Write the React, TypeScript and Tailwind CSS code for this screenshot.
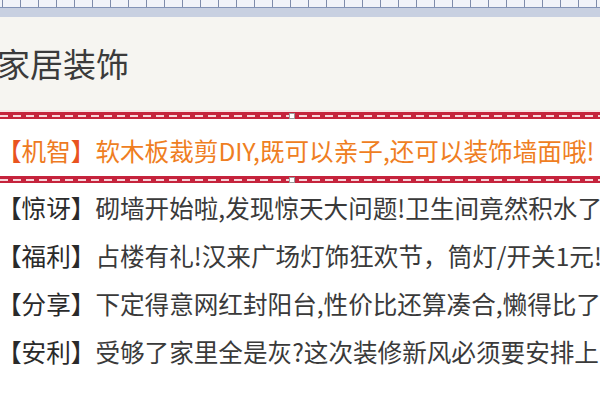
import React from 'react';

const rows = [
  { tag: '【惊讶】', text: '砌墙开始啦,发现惊天大问题!卫生间竟然积水了' },
  { tag: '【福利】', text: '占楼有礼!汉来广场灯饰狂欢节，筒灯/开关1元!' },
  { tag: '【分享】', text: '下定得意网红封阳台,性价比还算凑合,懒得比了' },
  { tag: '【安利】', text: '受够了家里全是灰?这次装修新风必须要安排上' },
];

// red selection band with white dashes and a centre handle
function Band({ h }: { h: string }) {
  return (
    <div className={`relative ${h} bg-[#c5233c] flex items-center`}>
      <div className="w-full h-[2px] bg-[repeating-linear-gradient(90deg,#f6d5da_0_8px,transparent_8px_13px)]" />
      <div className="absolute left-[289px] top-1/2 -translate-y-1/2 w-[6px] h-[6px] bg-white border border-[#999]" />
    </div>
  );
}

export default function App() {
  const ticks = Array.from({ length: 34 });
  return (
    <div
      className="w-[600px] h-[400px] overflow-hidden bg-white"
      style={{ fontFamily: '"Noto Sans CJK SC", "Noto Sans", sans-serif' }}
    >
      {/* ruler */}
      <div className="h-[7px] bg-[#f1f3f9] flex pl-[2px] gap-[17px]">
        {ticks.map((_, i) => (
          <div key={i} className="w-px h-full bg-[#7f8cab] shrink-0" />
        ))}
      </div>
      <div className="h-px bg-[#8393b6]" />
      <div className="h-[9px] bg-[#c8d0e1]" />

      {/* header */}
      <div className="h-[93px] bg-[#f6f5f1] flex items-center">
        <span className="text-[33px] leading-none text-[#3b3b3b] -ml-[3px]">家居装饰</span>
      </div>
      <div className="h-[2px] bg-[#f7e6e6]" />

      {/* selected row */}
      <Band h="h-[7px]" />
      <div className="h-[57px] bg-white flex items-center pt-[6px] whitespace-nowrap">
        <span className="text-[24.6px] leading-none -ml-[3px] text-[#e9541f]">【</span>
        <span className="text-[24.6px] leading-none text-[#ee7a22]">机智</span>
        <span className="text-[24.6px] leading-none text-[#e9541f]">】</span>
        <span className="text-[24.6px] leading-none text-[#ef7e22]">软木板裁剪DIY,既可以亲子,还可以装饰墙面哦!</span>
      </div>
      <Band h="h-[7px]" />

      {/* list */}
      <div className="flex flex-col">
        {rows.map((r) => (
          <div key={r.tag} className="h-[48px] flex items-center whitespace-nowrap">
            <span className="text-[24.6px] leading-none -ml-[3px] text-[#2a2a2a]">{r.tag}</span>
            <span className="text-[24.6px] leading-none text-[#3a3a3a]">{r.text}</span>
          </div>
        ))}
      </div>
    </div>
  );
}
